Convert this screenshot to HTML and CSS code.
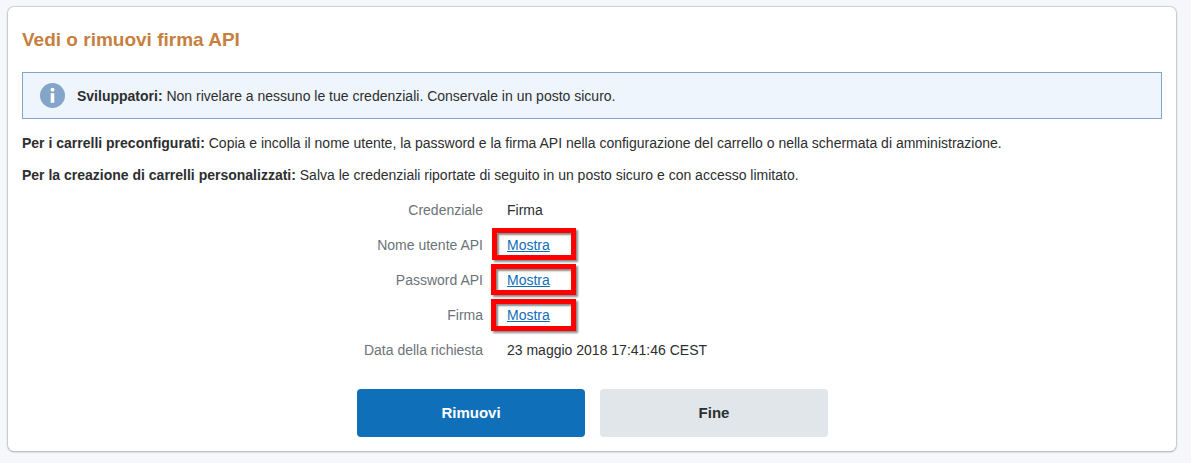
FILE: index.html
```html
<!DOCTYPE html>
<html lang="it">
<head>
<meta charset="utf-8">
<title>Vedi o rimuovi firma API</title>
<link rel="stylesheet" href="styles.css">
</head>
<body>
<main class="card">
  <h1 class="title">Vedi o rimuovi firma API</h1>
  <div class="notice">
    <svg class="notice-icon" viewBox="0 0 25 25" width="25" height="25" aria-hidden="true">
      <circle cx="12.5" cy="12.5" r="12.5" fill="#82a5c9"/>
      <circle cx="12.5" cy="6.8" r="2" fill="#fff"/>
      <rect x="10.7" y="10.2" width="3.6" height="9.6" fill="#fff"/>
    </svg>
    <p><strong>Sviluppatori:</strong> Non rivelare a nessuno le tue credenziali. Conservale in un posto sicuro.</p>
  </div>
  <p class="para"><strong>Per i carrelli preconfigurati:</strong> Copia e incolla il nome utente, la password e la firma API nella configurazione del carrello o nella schermata di amministrazione.</p>
  <p class="para para-second"><strong>Per la creazione di carrelli personalizzati:</strong> Salva le credenziali riportate di seguito in un posto sicuro e con accesso limitato.</p>
  <dl class="details">
    <div class="row"><dt>Credenziale</dt><dd>Firma</dd></div>
    <div class="row"><dt>Nome utente API</dt><dd><a href="#">Mostra</a><span class="mark mark-a"></span></dd></div>
    <div class="row"><dt>Password API</dt><dd><a href="#">Mostra</a><span class="mark mark-b"></span></dd></div>
    <div class="row"><dt>Firma</dt><dd><a href="#">Mostra</a><span class="mark mark-c"></span></dd></div>
    <div class="row"><dt>Data della richiesta</dt><dd>23 maggio 2018 17:41:46 CEST</dd></div>
  </dl>
  <div class="actions">
    <button class="btn btn-primary" type="button">Rimuovi</button>
    <button class="btn btn-secondary" type="button">Fine</button>
  </div>
</main>
</body>
</html>
```
FILE: styles.css
```css
* { box-sizing: border-box; }
html, body { height: 100%; }
body {
  margin: 0;
  padding: 7px 15px 0 8px;
  background: #f5f7fa;
  font-family: "Liberation Sans", Arial, sans-serif;
  font-size: 14px;
  line-height: 18px;
  color: #2c2e2f;
  overflow: hidden;
}
.card {
  height: 444px;
  padding: 22px 14px 0;
  background: #fff;
  border-radius: 6px;
  box-shadow: 0 1px 2px #b5b5b5, 0 0 1px 1px #d0d0d0;
}
.title {
  margin: 0;
  font-size: 19px;
  line-height: 22px;
  font-weight: 700;
  color: #c77f3f;
}
.notice {
  display: flex;
  align-items: center;
  height: 47px;
  margin-top: 21px;
  padding-left: 17px;
  background: #eff5fc;
  border: 1px solid #82a5c9;
}
.notice p { margin: 0 0 0 12px; }
.notice-icon { flex: none; }
.para { margin: 15px 0 0; }
.para-second { margin-top: 14px; }
.details { margin: 17px 0 0; }
.row {
  display: grid;
  grid-template-columns: 461px 1fr;
  column-gap: 24px;
  height: 35px;
}
dt { text-align: right; color: #6c7378; }
dd { position: relative; margin: 0; }
a { color: #0f6db6; }
.mark {
  position: absolute;
  width: 85px;
  border: 5px solid #f00;
  box-shadow: 2px 2px 2px #8a8a8a, inset 2px 2px 2px #8a8a8a;
}
.mark-a { top: -8px; height: 32px; left: -15px; width: 84px; }
.mark-b { top: -7px; height: 31px; left: -16px; }
.mark-c { top: -7px; height: 32px; left: -16px; }
.actions {
  display: flex;
  gap: 15px;
  margin-top: 13px;
  padding-left: 335px;
}
.btn {
  width: 228px;
  height: 48px;
  padding: 0 0 2px;
  border: 0;
  border-radius: 4px;
  font: 700 15px "Liberation Sans", Arial, sans-serif;
}
.btn-primary { background: #0f6fb8; color: #fff; }
.btn-secondary { background: #e1e6ea; color: #2c2e2f; }
```
